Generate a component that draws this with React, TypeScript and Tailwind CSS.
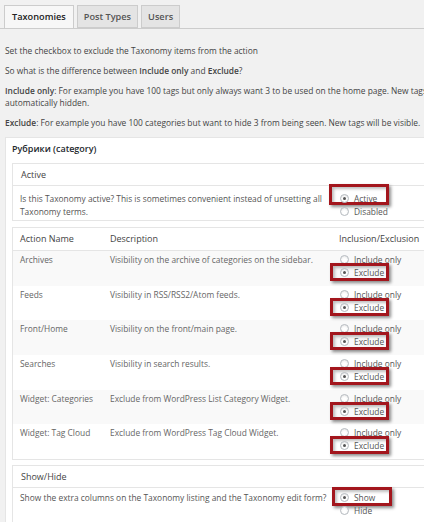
import React from 'react';

const rows = [
  { name: 'Archives', desc: 'Visibility on the archive of categories on the sidebar.' },
  { name: 'Feeds', desc: 'Visibility in RSS/RSS2/Atom feeds.' },
  { name: 'Front/Home', desc: 'Visibility on the front/main page.' },
  { name: 'Searches', desc: 'Visibility in search results.' },
  { name: 'Widget: Categories', desc: 'Exclude from WordPress List Category Widget.' },
  { name: 'Widget: Tag Cloud', desc: 'Exclude from WordPress Tag Cloud Widget.' },
];

function Radio({ checked, label, box }: { checked?: boolean; label: string; box?: string }) {
  return (
    <div className="relative flex items-center gap-[5px] h-[13px]">
      {box && (
        <span
          className={`absolute border-[3px] border-[#a3161d] shadow-[2px_2px_3px_rgba(0,0,0,0.45),inset_2px_2px_3px_rgba(0,0,0,0.25)] ${box}`}
        />
      )}
      <span className="relative w-[9px] h-[9px] rounded-full border border-[#b4b9be] bg-white shadow-[inset_0_1px_2px_rgba(0,0,0,0.1)] flex items-center justify-center">
        {checked && <span className="w-[3px] h-[3px] rounded-full bg-[#555]" />}
      </span>
      <span className="relative text-[#555]">{label}</span>
    </div>
  );
}

export default function App() {
  return (
    <div className="w-[424px] h-[522px] overflow-hidden bg-[#f1f1f1] font-['Open_Sans',sans-serif] text-[8.4px] leading-[12px] text-[#444]">
      {/* Tabs */}
      <div className="flex gap-[3px] pl-[4px] pt-[5px] border-b border-[#ccc] w-[600px]">
        <div className="h-[23px] px-[7px] flex items-center border border-b-0 border-[#ccc] bg-[#f7f7f7] text-[9.2px] font-semibold text-[#222] -mb-px">
          Taxonomies
        </div>
        <div className="h-[23px] px-[6px] flex items-center border border-[#ccc] bg-[#e4e4e4] text-[9.2px] font-semibold text-[#555]">
          Post Types
        </div>
        <div className="h-[23px] px-[6px] flex items-center border border-[#ccc] bg-[#e4e4e4] text-[9.2px] font-semibold text-[#555]">
          Users
        </div>
      </div>

      {/* Intro text */}
      <div className="px-[5px] pt-[16px] whitespace-nowrap flex flex-col gap-[8px]">
        <p>Set the checkbox to exclude the Taxonomy items from the action</p>
        <p>
          So what is the difference between <b className="font-semibold">Include only</b> and{' '}
          <b className="font-semibold">Exclude</b>?
        </p>
        <p>
          <b className="font-semibold">Include only</b>: For example you have 100 tags but only always want 3 to be used on the home page. New tags added will be
          <br />
          automatically hidden.
        </p>
        <p>
          <b className="font-semibold">Exclude</b>: For example you have 100 categories but want to hide 3 from being seen. New tags will be visible.
        </p>
      </div>

      {/* Panel */}
      <div className="ml-[5px] mt-[8px] w-[520px] bg-white border border-[#e5e5e5] pl-[6px] pt-[4px] pb-[10px]">
        <div className="h-[14px] flex items-center font-semibold text-[9px] text-[#23282d]">Рубрики (category)</div>

        {/* Active box */}
        <div className="mt-[7px] border border-[#e5e5e5]">
          <div className="h-[22px] flex items-center pl-[8px] text-[9px] text-[#444] border-b border-[#e5e5e5]">Active</div>
          <div className="flex h-[34px] pt-[6px] leading-[13px] text-[#555]">
            <div className="w-[319px] pl-[7px] whitespace-nowrap">
              Is this Taxonomy active? This is sometimes convenient instead of unsetting all
              <br />
              Taxonomy terms.
            </div>
            <div className="pl-[8px]">
              <Radio checked label="Active" box="left-[-11px] top-[-8px] w-[60px] h-[21px]" />
              <Radio label="Disabled" />
            </div>
          </div>
        </div>

        {/* Actions table */}
        <div className="mt-[6px] border border-[#e5e5e5]">
          <div className="flex h-[23px] items-center text-[9px] text-[#444] border-b border-[#e5e5e5]">
            <div className="w-[97px] pl-[7px]">Action Name</div>
            <div className="w-[229px]">Description</div>
            <div>Inclusion/Exclusion</div>
          </div>
          {rows.map((r, i) => (
            <div key={r.name} className={`flex h-[34.7px] pt-[2px] leading-[13px] text-[#666] ${i % 2 === 0 ? 'bg-[#f9f9f9]' : 'bg-white'}`}>
              <div className="w-[97px] pl-[7px] whitespace-nowrap">{r.name}</div>
              <div className="w-[229px] whitespace-nowrap">{r.desc}</div>
              <div className="pl-[1px]">
                <Radio label="Include only" />
                <Radio checked label="Exclude" box="left-[-10px] top-[-3px] w-[59px] h-[18px]" />
              </div>
            </div>
          ))}
        </div>

        {/* Show/Hide box */}
        <div className="mt-[5px] border border-[#e5e5e5]">
          <div className="h-[22px] flex items-center pl-[8px] text-[9px] text-[#444] border-b border-[#e5e5e5]">Show/Hide</div>
          <div className="flex h-[34px] pt-[3px] leading-[13px] text-[#555]">
            <div className="w-[319px] pl-[7px] whitespace-nowrap">Show the extra columns on the Taxonomy listing and the Taxonomy edit form?</div>
            <div className="pl-[8px]">
              <Radio checked label="Show" box="left-[-8px] top-[-4px] w-[60px] h-[19px]" />
              <Radio label="Hide" />
            </div>
          </div>
        </div>
      </div>
    </div>
  );
}
